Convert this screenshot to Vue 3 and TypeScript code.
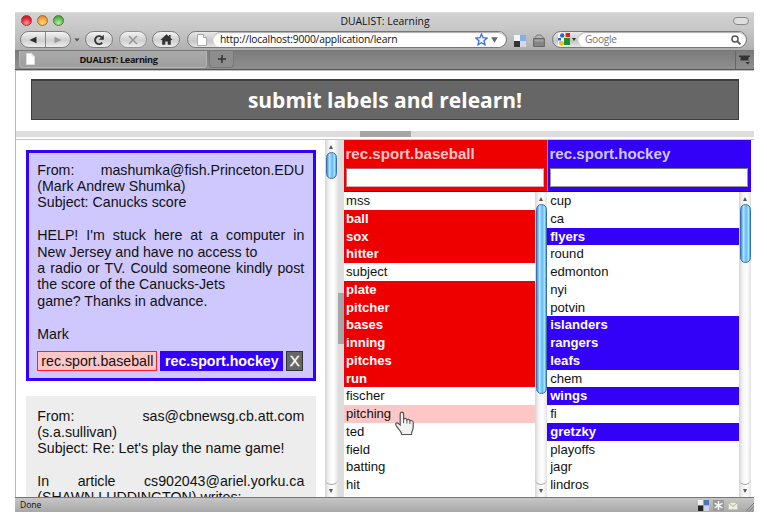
<script setup lang="ts">
interface Line { text: string; justify?: boolean }
interface Term { word: string; state?: 'on' | 'hover' }
interface Column { id: string; title: string; terms: Term[] }

const on = (word: string): Term => ({ word, state: 'on' })
const off = (word: string): Term => ({ word })

const firstMessage: Line[] = [
  { text: 'From: mashumka@fish.Princeton.EDU', justify: true },
  { text: '(Mark Andrew Shumka)' },
  { text: 'Subject: Canucks score' },
  { text: '' },
  { text: "HELP! I'm stuck here at a computer in", justify: true },
  { text: 'New Jersey and have no access to' },
  { text: 'a radio or TV. Could someone kindly post', justify: true },
  { text: 'the score of the Canucks-Jets' },
  { text: 'game? Thanks in advance.' },
  { text: '' },
  { text: 'Mark' },
]

const secondMessage: Line[] = [
  { text: 'From: sas@cbnewsg.cb.att.com', justify: true },
  { text: '(s.a.sullivan)' },
  { text: "Subject: Re: Let's play the name game!" },
  { text: '' },
  { text: 'In article cs902043@ariel.yorku.ca', justify: true },
  { text: '(SHAWN LUDDINGTON) writes:' },
]

const columns: Column[] = [
  {
    id: 'baseball',
    title: 'rec.sport.baseball',
    terms: [
      off('mss'), on('ball'), on('sox'), on('hitter'), off('subject'), on('plate'),
      on('pitcher'), on('bases'), on('inning'), on('pitches'), on('run'), off('fischer'),
      { word: 'pitching', state: 'hover' }, off('ted'), off('field'), off('batting'), off('hit'),
    ],
  },
  {
    id: 'hockey',
    title: 'rec.sport.hockey',
    terms: [
      off('cup'), off('ca'), on('flyers'), off('round'), off('edmonton'), off('nyi'),
      off('potvin'), on('islanders'), on('rangers'), on('leafs'), off('chem'), on('wings'),
      off('fi'), on('gretzky'), off('playoffs'), off('jagr'), off('lindros'),
    ],
  },
]
</script>

<template>
  <div class="window">
    <header class="titlebar">
      <div class="lights"><i class="light red" /><i class="light amber" /><i class="light green" /></div>
      <div class="title"><span>DUALIST: Learning</span></div>
      <i class="pill" />
    </header>

    <nav class="toolbar">
      <div class="btn pair">
        <span class="half"><svg width="8" height="8" viewBox="0 0 8 8"><path d="M7.5 .8v6.4L.5 4z" fill="#2b2b2b" /></svg></span>
        <span class="half next"><svg width="8" height="8" viewBox="0 0 8 8"><path d="M.5 .8v6.4L7.5 4z" fill="#999" /></svg></span>
      </div>
      <svg class="drop" width="6" height="4" viewBox="0 0 6 4"><path d="M.3 .4h5.4L3 3.6z" fill="#555" /></svg>
      <div class="btn reload">
        <svg width="12" height="12" viewBox="0 0 12 12"><path d="M9.2 8.6A4 4 0 1 1 8.6 3" fill="none" stroke="#333" stroke-width="1.9" /><path d="M10.8 .8v5H5.9z" fill="#333" /></svg>
      </div>
      <div class="btn stop">
        <svg width="10" height="10" viewBox="0 0 10 10"><path d="M1 1l8 8M9 1L1 9" stroke="#999" stroke-width="1.6" /></svg>
      </div>
      <div class="btn home">
        <svg width="13" height="11" viewBox="0 0 13 11"><path d="M6.5 .2L.4 6h1.8v4.8h3.1V7.4h2.4v3.4h3.1V6h1.8L10.6 4V1.1H9v1.4z" fill="#333" /></svg>
      </div>
      <div class="field url">
        <span class="lead"><svg width="10" height="12" viewBox="0 0 10 12"><path d="M.5 .5h6l3 3v8h-9z" fill="#fff" stroke="#aaa" /><path d="M6.5 .5v3h3" fill="#eee" stroke="#aaa" /></svg></span>
        <span class="entry"><span class="address">http://localhost:9000/application/learn</span>
          <svg class="star" width="13" height="13" viewBox="0 0 13 13"><path d="M6.5 1l1.6 3.7 4 .4-3 2.7.9 4-3.5-2.1L3 11.8l.9-4-3-2.7 4-.4z" fill="#eef5ff" stroke="#3b6fe0" stroke-width="1.3" /></svg>
          <svg width="7" height="6" viewBox="0 0 7 6"><path d="M.2 .3h6.6L3.5 5.7z" fill="#666" /></svg>
        </span>
      </div>
      <svg class="delicious" width="12" height="12" viewBox="0 0 12 12"><path d="M0 0h6v6H0z" fill="#f4f4f4" /><path d="M6 0h6v6H6z" fill="#7db0ee" /><path d="M0 6h6v6H0z" fill="#333" /><path d="M6 6h6v6H6z" fill="#d4d9e0" /></svg>
      <svg class="bag" width="12" height="13" viewBox="0 0 12 13"><path d="M1 4.500L4 1h4l3 3.500z" fill="#b5b5b5" stroke="#7d7d7d" /><path d="M.6 4.500h10.800v8H.6z" fill="#858585" stroke="#666" /><path d="M1.500 5.500h9v2h-9z" fill="#a5a5a5" /></svg>
      <div class="field search">
        <span class="lead">
          <svg width="12" height="13" viewBox="0 0 12 13"><path d="M0 0h12v13H0z" fill="#fff" /><path d="M7.500 0H12v4H7.500z" fill="#e8201c" /><path d="M6 4.800h6V12H6z" fill="#17922f" /><circle cx="4.200" cy="2.500" r="2.200" fill="#2c62d2" /><path d="M0 5h3v2.500H0z" fill="#2c62d2" /><circle cx="3.500" cy="10.300" r="2.500" fill="#f6bd1a" /></svg>
          <svg width="4" height="3" viewBox="0 0 4 3"><path d="M0 0h4L2 3z" fill="#333" /></svg>
        </span>
        <span class="entry"><span class="hint">Google</span>
          <svg width="10" height="10" viewBox="0 0 10 10"><circle cx="4" cy="4" r="3" fill="none" stroke="#555" stroke-width="1.500" /><path d="M6.200 6.200l3.200 3.200" stroke="#555" stroke-width="1.800" /></svg>
        </span>
      </div>
    </nav>

    <div class="tabs">
      <div class="tab">
        <svg width="9" height="12" viewBox="0 0 9 12"><path d="M.5 .5h5l3 3v8h-8z" fill="#fff" stroke="#ddd" /><path d="M5.500 .5v3h3z" fill="#ddd" /></svg>
        <span class="tabname">DUALIST: Learning</span>
      </div>
      <div class="newtab"><svg width="8" height="8" viewBox="0 0 8 8"><path d="M4 0v8M0 4h8" stroke="#333" stroke-width="1.500" /></svg></div>
      <div class="tablist"><svg width="12" height="10" viewBox="0 0 12 10"><path d="M0 .5h11v1.500H0zM1.500 1.500h8v4h-8zM6.500 7h4.500L8.800 9.500z" fill="#333" /></svg></div>
    </div>

    <main class="page">
      <section class="top"><button class="submit"><span>submit labels and relearn!</span></button></section>
      <div class="split-h"><i /></div>
      <div class="lower">
        <section class="messages">
          <article class="card chosen">
            <p v-for="(line, i) in firstMessage" :key="i" :class="{ justify: line.justify }">{{ line.text }}</p>
            <div class="labels"><span class="label pink">rec.sport.baseball</span><span class="label blue">rec.sport.hockey</span><span class="label dismiss">X</span></div>
          </article>
          <article class="card">
            <p v-for="(line, i) in secondMessage" :key="i" :class="{ justify: line.justify }">{{ line.text }}</p>
          </article>
        </section>
        <div class="scroll messages-scroll"><b class="up" /><div class="track"><i class="thumb" /></div><b class="down" /></div>
        <div class="split-v"><i /></div>
        <section v-for="col in columns" :key="col.id" class="column" :class="col.id">
          <div class="head"><h2>{{ col.title }}</h2><input type="text" :aria-label="col.title"></div>
          <div class="body">
            <ul>
              <li v-for="term in col.terms" :key="term.word" :class="term.state">
                {{ term.word }}
                <svg v-if="term.state === 'hover'" class="hand" width="21" height="25" viewBox="0 0 21 25"><path d="M6.200 14V3.200C6.200 .4 9.600 .4 9.600 3.200V8C10.500 7 12.500 7.300 12.900 8.800c.8-.9 2.900-.5 3 1 1-.7 3.300 0 3.300 1.800v5.200c0 2.200-1.700 3.200-1.700 6.700H7.800c-.3-3-3.300-5.200-5.300-8.300C.4 12.500 2.600 10.900 4.400 12.500z" fill="#f2f2f2" stroke="#555" stroke-width="1.200" /><path d="M9.600 8v4.200M12.900 9v3.500M15.900 10v3" fill="none" stroke="#555" /></svg>
              </li>
            </ul>
            <div class="scroll"><b class="up" /><div class="track"><i class="thumb" /></div><b class="down" /></div>
          </div>
        </section>
      </div>
    </main>

    <footer class="status">
      <span class="done">Done</span>
      <svg width="11" height="11" viewBox="0 0 11 11"><path d="M0 0h5.500v5.500H0z" fill="#eee" /><path d="M5.500 0H11v5.500H5.500z" fill="#4d77b8" /><path d="M0 5.500h5.500V11H0z" fill="#222" /><path d="M5.500 5.500H11V11H5.500z" fill="#ccd4e2" /></svg>
      <svg width="11" height="11" viewBox="0 0 11 11"><path d="M0 0h11v11H0z" fill="#999" /><path d="M5.500 1v9M1.600 3.200l7.800 4.600M9.400 3.200L1.600 7.800" stroke="#f5f5f5" stroke-width="1.500" /></svg>
      <svg width="10" height="11" viewBox="0 0 10 11"><path d="M.5 2.500h9v7h-9z" fill="#eeeee2" stroke="#c5c5b8" /><path d="M.5 2.500L5 6.500l4.500-4" fill="none" stroke="#aaa" /></svg>
      <svg class="grip" width="8" height="10" viewBox="0 0 8 10"><path d="M0 9.500L8 1M3 9.500L8 4.200M6 9.500L8 7.400" stroke="#777" /></svg>
    </footer>
  </div>
</template>

<style>
body { background: #fff; overflow: hidden; }
</style>

<style scoped>
* { box-sizing: border-box; }
svg { display: block; flex: none; }
.window { width: 739px; height: 500px; margin: 12px 0 0 15px; display: flex; flex-direction: column; font-family: "Open Sans", "Noto Sans", sans-serif; color: #111; white-space: nowrap; }

.titlebar { height: 18px; flex: none; display: flex; align-items: center; padding: 0 5px 0 6px; background: linear-gradient(#d2d2d2, #c6c6c6); border-top: 1px solid #dcdcdc; }
.lights { display: flex; gap: 5px; width: 60px; }
.light { width: 11px; height: 11px; border-radius: 50%; border: 1px solid; position: relative; top: -1px; }
.light.red { background: radial-gradient(circle at 50% 80%, #ff9a9a, #e8222e 60%, #b01420); border-color: #a33; }
.light.amber { background: radial-gradient(circle at 50% 80%, #ffe27a, #f29a35 65%, #cc7320); border-color: #a9692d; }
.light.green { background: radial-gradient(circle at 50% 80%, #b8f09a, #58b648 65%, #3d8a35); border-color: #3f7d3a; }
.title { flex: 1; text-align: center; font-size: 10.400px; line-height: 14px; padding: 0 44px 2px 0; }
.pill { width: 16px; height: 8px; margin-bottom: 2px; border: 1px solid #888; border-radius: 4px; background: #ddd; }

.toolbar { height: 20px; flex: none; display: flex; align-items: flex-start; padding: 1px 7px 0 5px; background: linear-gradient(#c6c6c6, #b0b0b0); }
.btn { height: 17px; border: 1px solid #7b7b7b; border-radius: 9px; background: linear-gradient(#f4f4f4, #cfcfcf 55%, #ededed); display: flex; align-items: center; justify-content: center; }
.pair { width: 51px; }
.half { flex: 1; height: 15px; display: flex; align-items: center; justify-content: center; }
.half.next { border-left: 1px solid #888; }
.drop { margin: 7px 5px 0 3px; }
.reload { width: 28px; margin-right: 6px; }
.stop { width: 28px; margin-right: 5px; border-color: #929292; }
.home { width: 28px; margin-right: 7px; }
.field { height: 17px; border: 1px solid #777; border-radius: 9px; display: flex; background: linear-gradient(#e9e9e9, #c6c6c6 60%, #e6e6e6); overflow: hidden; }
.lead { display: flex; align-items: center; }
.entry { flex: 1; height: 15px; background: #fff; border-radius: 8px; display: flex; align-items: center; box-shadow: inset 0 1px 1px #aaa; }
.url { width: 320px; margin-right: 7px; }
.url .lead { width: 25px; padding-left: 9px; }
.url .entry { padding: 0 8px 0 7px; }
.address { flex: 1; font-size: 10.300px; letter-spacing: -.19px; line-height: 15px; }
.star { margin-right: 3px; }
.delicious { margin: 4px 7px 0 0; }
.bag { margin: 3px 7px 0 0; }
.search { flex: 1; }
.search .lead { width: 25px; padding-left: 5px; gap: 2px; }
.search .entry { padding: 0 5px 0 7px; }
.hint { flex: 1; font-size: 10.200px; letter-spacing: -.3px; line-height: 15px; color: #777; }

.tabs { height: 20px; flex: none; display: flex; align-items: flex-start; padding-left: 4px; background: linear-gradient(#7c7c7c, #8f8f8f); border-top: 1px solid #777; border-bottom: 1px solid #555; }
.tab { width: 188px; height: 17px; display: flex; align-items: center; padding-left: 6px; background: linear-gradient(#aaa, #9f9f9f); border: 1px solid #b4b4b4; border-top: 0; border-radius: 0 0 4px 4px; }
.tabname { flex: 1; text-align: center; font-size: 9.200px; font-weight: 700; letter-spacing: -.35px; padding-right: 4px; line-height: 15px; }
.newtab { width: 25px; height: 17px; margin-left: 2px; display: flex; align-items: center; justify-content: center; background: #8e8e8e; border: 1px solid #777; border-top: 0; border-radius: 0 0 4px 4px; }
.tablist { width: 19px; height: 18px; margin-left: auto; padding: 4px 0 0 3px; border-left: 1px solid #666; }

.page { flex: 1; min-height: 0; display: flex; flex-direction: column; background: #fff; border-left: 1px solid #bbb; border-top: 1px solid #c2c2c2; }
.top { height: 60px; flex: none; padding: 8px 15px 0; }
.submit { display: block; width: 708px; height: 41px; padding: 0; border: 1px solid #3e3e3e; border-width: 2px 1px 1px; background: #666; color: #fff; font: 700 21px/38px "Open Sans", sans-serif; }
.split-h { height: 6px; flex: none; background: #ddd; display: flex; }
.split-h i { width: 51px; height: 6px; margin-left: 344px; background: #a6a6a6; }
.lower { flex: 1; min-height: 0; margin-top: 2px; border-top: 1px solid #c8c8c8; display: flex; font-family: "Liberation Sans", Arial, sans-serif; }
.messages { width: 309px; height: 357px; overflow: hidden; padding: 10px 9px 0 10px; }
.card { width: 290px; margin-bottom: 15px; padding: 11.500px 11px 11px 11.300px; background: #ededed; font-size: 14.200px; line-height: 16.400px; }
.card p { margin: 0; height: 16.400px; width: 267px; }
.card p.justify { text-align: justify; text-align-last: justify; white-space: normal; }
.chosen { height: 231px; border: 3px solid #3300f8; padding: 8.600px 8px 0 8.300px; background: #cec8ff; }
.labels { display: flex; gap: 3px; margin-top: 9px; }
.label { height: 20px; line-height: 18px; border: 1px solid; text-align: center; }
.pink { width: 120px; background: #ffc6c6; border-color: #f22; }
.blue { width: 123px; background: #3300f8; border-color: #3300f8; color: #fff; font-weight: 700; }
.dismiss { width: 17px; background: #666; border-color: #333; color: #fff; font-size: 15px; -webkit-text-stroke: .3px #fff; }

.scroll { width: 12px; flex: none; display: flex; flex-direction: column; align-items: center; background: linear-gradient(90deg, #d5d5d5, #f3f3f3 30%, #fff 65%, #e3e3e3); }
.messages-scroll { width: 13px; }
.up, .down { height: 12px; width: 0; flex: none; position: relative; }
.up::before, .down::before { content: ""; position: absolute; left: -2.500px; top: 5px; border: 2.500px solid transparent; border-top-width: 0; border-bottom: 4px solid #555; }
.down::before { border-top: 4px solid #555; border-bottom-width: 0; top: 4px; }
.track { flex: 1; width: 100%; border-radius: 0 0 6px 6px; border-bottom: 1px solid #aaa; display: flex; justify-content: center; }
.thumb { width: 11px; height: 27px; border-radius: 6px; border: 1px solid #3a6fae; background: linear-gradient(90deg, #3e8ed8, #b5e4fd 28%, #74c4f7 50%, #68bdf5 60%, #a9e6ff 85%, #4a98dc); }
.split-v { width: 6px; flex: none; background: #ddd; padding-top: 153px; }
.split-v i { display: block; width: 6px; height: 51px; background: #a6a6a6; }

.column { width: 203px; flex: none; }
.hockey { width: 204px; }
.head { height: 52px; padding: 5px 3px 0 1.500px; background: #ee0000; border-bottom: 1px solid #900; color: #ffc6c6; }
.hockey .head { padding-left: 1.500px; background: #3300f8; border-bottom-color: #20009a; border-left: 1px solid #9a80d0; color: #cec8ff; }
.head h2 { margin: 0; font-size: 15.100px; line-height: 18px; font-weight: 700; }
.head input { display: block; width: 100%; height: 19px; margin-top: 5px; padding: 0; border: 1px solid #999; border-top-color: #777; background: #fff; }
.baseball .head input { border-color: #a66 #daa #daa #c77; }
.body { height: 305px; display: flex; }
.body ul { flex: 1; margin: 0; padding: 0; list-style: none; font-size: 13.100px; }
.body li { height: 17.750px; line-height: 17.750px; padding-left: 2px; position: relative; }
.hockey li { padding-left: 3.200px; }
.body li.on { color: #fff; font-weight: 700; background: #ee0000; }
.hockey .body li.on { background: #3300f8; }
.body li.hover { background: #ffc6c6; }
.hand { position: absolute; left: 50px; top: 6px; z-index: 2; }
.baseball .thumb { height: 190px; }
.hockey .thumb { height: 59px; }

.status { height: 15px; flex: none; display: flex; align-items: center; gap: 4px; padding: 0 0 0 5px; background: linear-gradient(#c6c6c6, #a8a8a8); border-top: 1px solid #777; }
.done { flex: 1; font-size: 8.500px; line-height: 12px; }
.grip { margin-left: 4px; align-self: flex-end; }
</style>
